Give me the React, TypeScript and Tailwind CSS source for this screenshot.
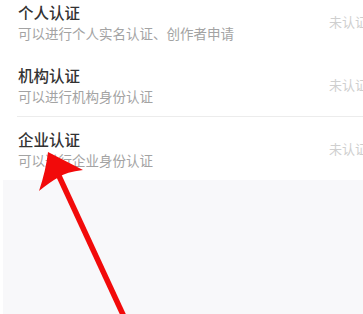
export default function App() {
  const rows = [
    { title: "个人认证", desc: "可以进行个人实名认证、创作者申请", divider: false },
    { title: "机构认证", desc: "可以进行机构身份认证", divider: true },
    { title: "企业认证", desc: "可以进行企业身份认证", divider: false },
  ];

  return (
    <div
      className="relative w-[363px] h-[314px] overflow-hidden bg-white"
      style={{ fontFamily: '"Noto Sans CJK SC", "Noto Sans", sans-serif' }}
    >
      <div className="mt-[-10px]">
        {rows.map((row, idx) => (
          <div key={idx}>
            <div className="flex items-center pl-[18px] pt-[11px] pb-[10px]">
              <div className="flex-1">
                <div className="text-[15.5px] leading-[22px] font-medium text-[#333]">{row.title}</div>
                <div className="text-[13.5px] leading-[20px] text-[#a3a3a3]">{row.desc}</div>
              </div>
              <span className="w-[34px] shrink-0 whitespace-nowrap text-[13px] text-[#cfcfcf]">未认证</span>
            </div>
            {row.divider && <div className="ml-[17px] h-px bg-[#ececec]" />}
          </div>
        ))}
      </div>
      <div className="ml-[3px] h-[200px] bg-[#f8f8fa]" />

      {/* red pointer arrow drawn over the list */}
      <svg className="absolute left-0 top-0" width="363" height="314" viewBox="0 0 363 314">
        <line x1="59" y1="176" x2="125.5" y2="320" stroke="#f20a0a" strokeWidth="5.5" />
        <path d="M48 152 L83 170 Q66 172 59 177 Q50 182 39 191 Q46 170 48 152 Z" fill="#f20a0a" />
      </svg>
    </div>
  );
}
